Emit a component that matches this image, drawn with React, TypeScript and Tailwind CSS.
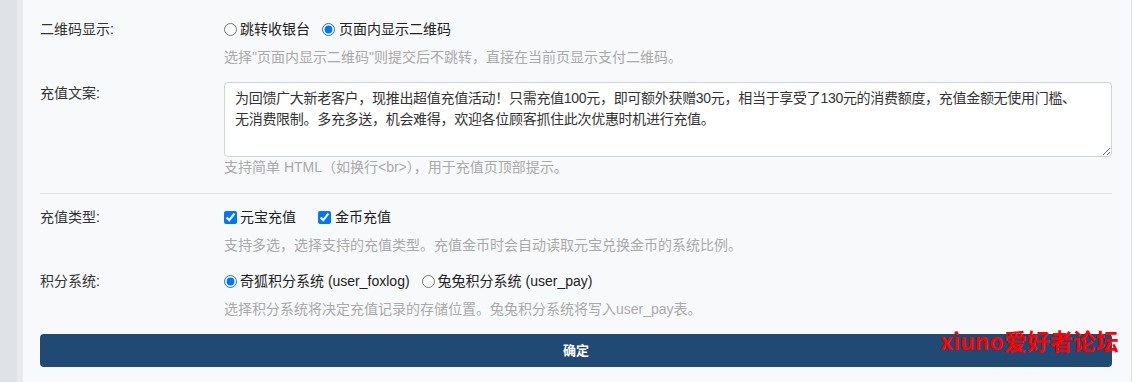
import React from "react";

const FONT = '"Liberation Sans", "Noto Sans CJK SC", sans-serif';

function Row({ label, children, help, labelTop = "pt-0" }: { label: string; children: React.ReactNode; help: string; labelTop?: string }) {
  return (
    <div className="flex">
      <div className={`w-[184px] shrink-0 text-[14px] leading-[22px] text-[#333] ${labelTop}`}>{label}</div>
      <div className="flex-1 flex flex-col">
        {children}
        <div className="text-[14px] leading-[20px] text-[#aaaaaa] mt-[7px]">{help}</div>
      </div>
    </div>
  );
}

export default function App() {
  return (
    <div className="w-[1132px] h-[382px] flex overflow-hidden relative" style={{ fontFamily: FONT }}>
      <div className="w-[17px] bg-[#dfe2e6]" />
      <div className="w-[6px] bg-[#e8eaed]" />
      <div className="flex-1 bg-[#f8f9fa] pl-[17px] pr-[19px] pt-[18px] flex flex-col border-r border-[#dcdfe3]">
        <Row label="二维码显示:" help={'选择"页面内显示二维码"则提交后不跳转，直接在当前页显示支付二维码。'}>
          <div className="flex items-center h-[22px] text-[14px] text-[#222]">
            <input type="radio" name="qr" className="m-0 w-[13px] h-[13px] accent-[#0075ff]" />
            <span className="ml-[3px]">跳转收银台</span>
            <input type="radio" name="qr" defaultChecked className="m-0 ml-[12px] w-[13px] h-[13px] accent-[#0075ff]" />
            <span className="ml-[4px]">页面内显示二维码</span>
          </div>
        </Row>

        <div className="mt-[15px] flex">
          <div className="w-[184px] shrink-0 text-[14px] leading-[22px] text-[#333] pt-0">充值文案:</div>
          <div className="flex-1 flex flex-col">
            <textarea
              className="block w-full h-[75px] bg-white border border-[#ced4da] rounded-[4px] pl-[10px] pr-[24px] pt-[5px] text-[14px] leading-[21px] tracking-[-0.3px] text-[#333] outline-none"
              style={{ fontFamily: FONT }}
              defaultValue="为回馈广大新老客户，现推出超值充值活动！只需充值100元，即可额外获赠30元，相当于享受了130元的消费额度，充值金额无使用门槛、无消费限制。多充多送，机会难得，欢迎各位顾客抓住此次优惠时机进行充值。"
            />
            <div className="text-[14px] leading-[20px] text-[#aaaaaa] mt-0">支持简单 HTML（如换行&lt;br&gt;），用于充值页顶部提示。</div>
          </div>
        </div>

        <div className="mt-[16px] h-px bg-[#dee2e6]" />

        <div className="mt-[12px]">
          <Row label="充值类型:" help="支持多选，选择支持的充值类型。充值金币时会自动读取元宝兑换金币的系统比例。">
            <div className="flex items-center h-[22px] text-[14px] text-[#222]">
              <input type="checkbox" defaultChecked className="m-0 w-[13px] h-[13px] accent-[#0075ff]" />
              <span className="ml-[3px]">元宝充值</span>
              <input type="checkbox" defaultChecked className="m-0 ml-[22px] w-[13px] h-[13px] accent-[#0075ff]" />
              <span className="ml-[4px]">金币充值</span>
            </div>
          </Row>
        </div>

        <div className="mt-[15px]">
          <Row label="积分系统:" help="选择积分系统将决定充值记录的存储位置。兔兔积分系统将写入user_pay表。">
            <div className="flex items-center h-[22px] text-[14px] text-[#222]">
              <input type="radio" name="ps" defaultChecked className="m-0 w-[13px] h-[13px] accent-[#0075ff]" />
              <span className="ml-[3px]">奇狐积分系统 (user_foxlog)</span>
              <input type="radio" name="ps" className="m-0 ml-[12px] w-[13px] h-[13px] accent-[#0075ff]" />
              <span className="ml-[3px]">兔兔积分系统 (user_pay)</span>
            </div>
          </Row>
        </div>

        <button className="mt-[15px] h-[33px] w-full rounded-[4px] bg-[#204a73] text-white text-[13px] font-bold">确定</button>
      </div>
      <div className="absolute left-[940px] top-[327px] text-[23px] leading-[26px] font-bold text-[#ff0000]" style={{ fontFamily: '"Noto Sans CJK SC", sans-serif' }}>
        xiuno爱好者论坛
      </div>
    </div>
  );
}
